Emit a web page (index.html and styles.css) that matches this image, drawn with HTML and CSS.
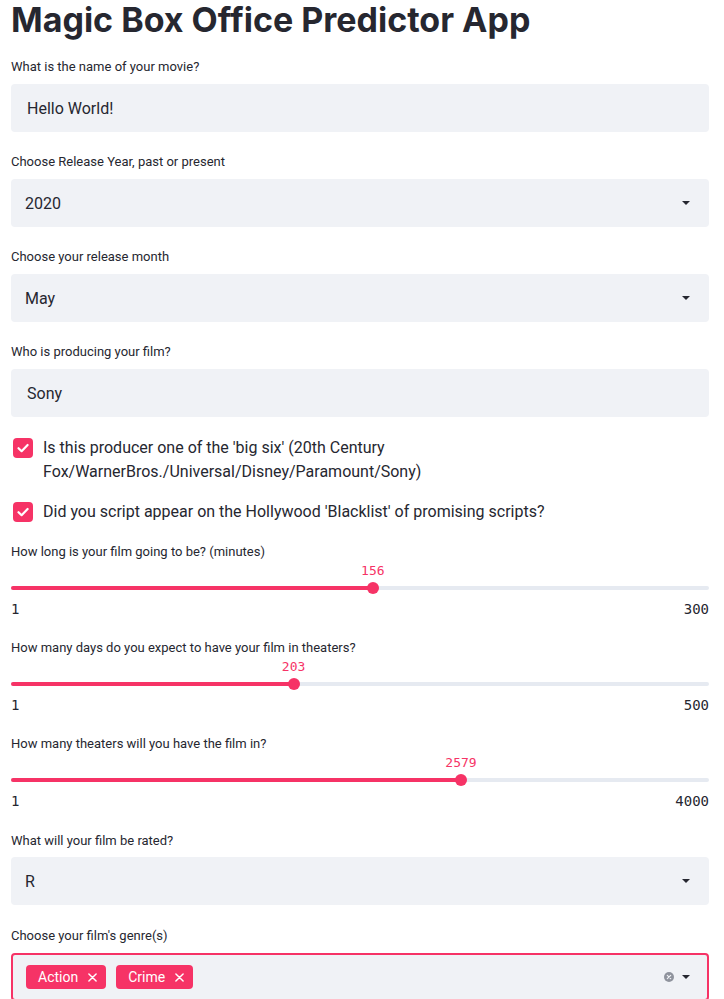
FILE: index.html
```html
<!DOCTYPE html>
<html lang="en">
<head>
<meta charset="utf-8">
<title>Magic Box Office Predictor App</title>
<link rel="stylesheet" href="styles.css">
</head>
<body>
<main class="app">
  <h1 class="title">Magic Box Office Predictor App</h1>

  <div class="widget">
    <div class="label">What is the name of your movie?</div>
    <div class="field">Hello World!</div>
  </div>

  <div class="widget">
    <div class="label">Choose Release Year, past or present</div>
    <div class="field select"><span>2020</span><span class="caret"></span></div>
  </div>

  <div class="widget">
    <div class="label">Choose your release month</div>
    <div class="field select"><span>May</span><span class="caret"></span></div>
  </div>

  <div class="widget">
    <div class="label">Who is producing your film?</div>
    <div class="field">Sony</div>
  </div>

  <div class="check first">
    <span class="box"><svg viewBox="0 0 20 20" width="20" height="20"><path d="M5.5 10.2 L8.6 13.2 L14.6 7" fill="none" stroke="#fff" stroke-width="2.2" stroke-linecap="round" stroke-linejoin="round"/></svg></span>
    <span class="check-text">Is this producer one of the 'big six' (20th Century Fox/WarnerBros./Universal/Disney/Paramount/Sony)</span>
  </div>

  <div class="check last">
    <span class="box"><svg viewBox="0 0 20 20" width="20" height="20"><path d="M5.5 10.2 L8.6 13.2 L14.6 7" fill="none" stroke="#fff" stroke-width="2.2" stroke-linecap="round" stroke-linejoin="round"/></svg></span>
    <span class="check-text">Did you script appear on the Hollywood 'Blacklist' of promising scripts?</span>
  </div>

  <div class="slider">
    <div class="label">How long is your film going to be? (minutes)</div>
    <div class="slider-area">
      <div class="track"><div class="fill" style="width:51.84%"></div></div>
      <div class="thumb" style="left:51.84%"></div>
      <div class="value" style="left:51.84%">156</div>
    </div>
    <div class="minmax"><span>1</span><span>300</span></div>
  </div>

  <div class="slider">
    <div class="label">How many days do you expect to have your film in theaters?</div>
    <div class="slider-area">
      <div class="track"><div class="fill" style="width:40.48%"></div></div>
      <div class="thumb" style="left:40.48%"></div>
      <div class="value" style="left:40.48%">203</div>
    </div>
    <div class="minmax"><span>1</span><span>500</span></div>
  </div>

  <div class="slider">
    <div class="label">How many theaters will you have the film in?</div>
    <div class="slider-area">
      <div class="track"><div class="fill" style="width:64.47%"></div></div>
      <div class="thumb" style="left:64.47%"></div>
      <div class="value" style="left:64.47%">2579</div>
    </div>
    <div class="minmax"><span>1</span><span>4000</span></div>
  </div>

  <div class="widget rated">
    <div class="label">What will your film be rated?</div>
    <div class="field select"><span>R</span><span class="caret"></span></div>
  </div>

  <div class="widget">
    <div class="label">Choose your film's genre(s)</div>
    <div class="field multi">
      <div class="tags">
        <span class="tag">Action<svg class="x" viewBox="0 0 10 10" width="9" height="9"><path d="M1 1 L9 9 M9 1 L1 9" stroke="#fff" stroke-width="1.6" stroke-linecap="round"/></svg></span>
        <span class="tag">Crime<svg class="x" viewBox="0 0 10 10" width="9" height="9"><path d="M1 1 L9 9 M9 1 L1 9" stroke="#fff" stroke-width="1.6" stroke-linecap="round"/></svg></span>
      </div>
      <div class="controls">
        <span class="clear"><svg viewBox="0 0 10 10" width="10" height="10"><circle cx="5" cy="5" r="5" fill="#8f939d"/><path d="M3.3 3.3 L6.7 6.7 M6.7 3.3 L3.3 6.7" stroke="#f0f2f6" stroke-width="1.2" stroke-linecap="round"/></svg></span>
        <span class="caret"></span>
      </div>
    </div>
  </div>
</main>
</body>
</html>
```

FILE: styles.css
```css
* { box-sizing: border-box; }
html, body { margin: 0; padding: 0; background: #fff; }
body {
  font-family: Roboto, "Liberation Sans", sans-serif;
  color: #262730;
  width: 724px;
  overflow: hidden;
}
.app {
  padding: 0 15px 0 11px;
  display: flex;
  flex-direction: column;
}
.title {
  margin: 0;
  font-family: Inter, Roboto, sans-serif;
  font-size: 34px;
  font-weight: 700;
  line-height: 40px;
  height: 57px;
  letter-spacing: 0;
  color: #262730;
}
.widget { margin-bottom: 20px; }
.label {
  font-size: 13px;
  line-height: 20px;
  margin-bottom: 7px;
  color: #262730;
}
.field {
  height: 48px;
  background: #f0f2f6;
  border-radius: 4px;
  padding: 0 16px;
  display: flex;
  align-items: center;
  font-size: 16px;
}
.select { padding-left: 14px; justify-content: space-between; padding-right: 19px; }
.caret {
  width: 0; height: 0;
  border-left: 4px solid transparent;
  border-right: 4px solid transparent;
  border-top: 4px solid #262730;
}
.check {
  display: flex;
  align-items: flex-start;
  gap: 10px;
  padding-left: 2px;
  margin-bottom: 16px;
  font-size: 16px;
  line-height: 24px;
}
.check.first { margin-top: -1px; }
.check.last { margin-bottom: 18px; }
.box {
  flex: none;
  width: 20px; height: 20px;
  margin-top: 2px;
  border-radius: 4px;
  background: #f63366;
  display: flex;
}
.slider { margin-bottom: 20px; }
.slider .label { margin-bottom: 0; }
.slider-area {
  position: relative;
  height: 36px;
}
.track {
  position: absolute;
  left: 0; right: 0; top: 24px;
  height: 4px;
  border-radius: 2px;
  background: #e6eaf1;
}
.fill {
  height: 100%;
  background: #f63366;
  border-radius: 2px;
}
.thumb {
  position: absolute;
  top: 20px;
  width: 12px; height: 12px;
  margin-left: -6px;
  border-radius: 50%;
  background: #f63366;
}
.value {
  position: absolute;
  top: 0;
  transform: translateX(-50%);
  font-family: "DejaVu Sans Mono", "Liberation Mono", monospace;
  font-size: 13px;
  line-height: 18px;
  color: #f63366;
}
.minmax {
  display: flex;
  justify-content: space-between;
  font-family: "DejaVu Sans Mono", "Liberation Mono", monospace;
  font-size: 14px;
  line-height: 18px;
  margin-top: 2px;
}
.rated { margin-top: 1px; margin-bottom: 21px; }
.rated .label { margin-bottom: 6px; }
.multi {
  border: 2px solid #f63366;
  padding: 0 17px 0 13px;
  justify-content: space-between;
}
.tags { display: flex; gap: 10px; }
.tag {
  display: inline-flex;
  align-items: center;
  height: 24px;
  padding: 0 9px 0 12px;
  border-radius: 4px;
  background: #f63366;
  color: #fff;
  font-size: 14px;
}
.tag .x { margin-left: 10px; }
.controls { display: flex; align-items: center; gap: 8px; }
.clear { display: flex; }
```
